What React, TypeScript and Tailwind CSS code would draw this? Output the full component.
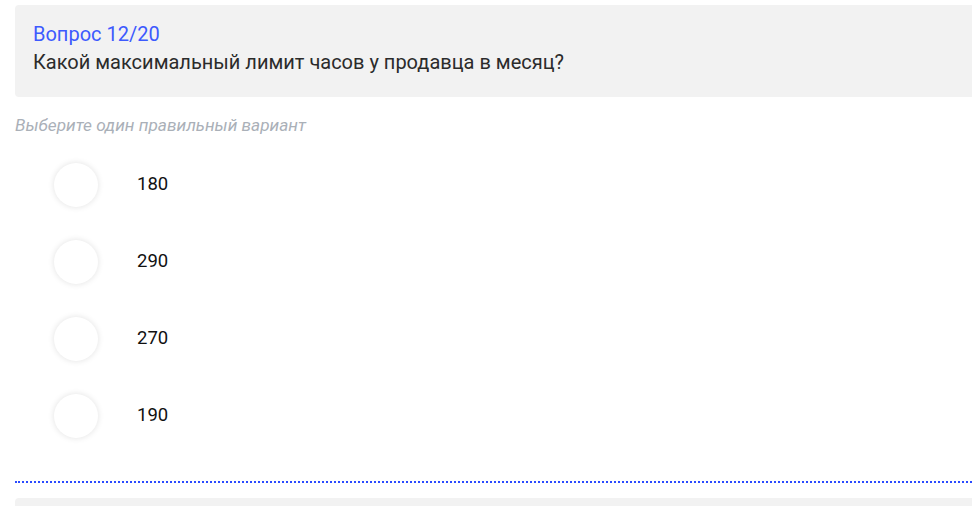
const options = ['180', '290', '270', '190']

export default function App() {
  return (
    <div className="min-h-[506px] bg-white pt-[5px] pl-[15px] font-['Roboto',sans-serif]">
      <section className="rounded-l-[4px] bg-[#f2f2f2] px-[18px] pt-[15px] pb-[21px]">
        <p className="text-[20px] leading-[28px] text-[#3d5afe]">Вопрос 12/20</p>
        <h2 className="text-[20px] leading-[28px] text-[#2b2b2b]">
          Какой максимальный лимит часов у продавца в месяц?
        </h2>
      </section>

      <p className="mt-[17px] text-[17.25px] leading-[22px] italic text-[#aab0b8]">
        Выберите один правильный вариант
      </p>

      <ul className="mt-[10px] flex flex-col">
        {options.map((option) => (
          <li key={option} className="flex h-[77px] items-center">
            <span className="ml-[39px] h-[44px] w-[44px] rounded-full bg-white shadow-[0_0_6px_rgba(0,0,0,0.12)]" />
            <span className="ml-[39px] text-[18.5px] text-[#111]">{option}</span>
          </li>
        ))}
      </ul>

      <div className="mt-[27px] border-t-2 border-dotted border-[#2b4bff]" />
      <div className="mt-[15px] h-[20px] rounded-tl-[4px] bg-[#f2f2f2]" />
    </div>
  )
}
